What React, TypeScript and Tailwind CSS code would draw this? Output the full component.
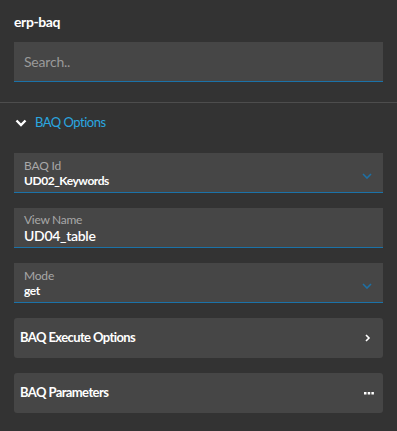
const font = { fontFamily: "Lato, 'Noto Sans', sans-serif" };

function SelectField({ label, value }: { label: string; value: string }) {
  return (
    <div className="relative h-10 bg-[#464646] border-b border-[#1b72a8] px-[10px] pt-[5px]">
      <div className="text-[12px] leading-[15px] text-[#a8a8a8] tracking-[-0.2px]">{label}</div>
      <div className="text-[12px] leading-[15px] font-bold text-white tracking-[-0.45px]">{value}</div>
      <svg
        className="absolute right-[11px] top-[20px]"
        width="10"
        height="6"
        viewBox="0 0 10 6"
        fill="none"
      >
        <path d="M1 1l4 4 4-4" stroke="#1e6fa3" strokeWidth="1.6" />
      </svg>
    </div>
  );
}

export default function App() {
  return (
    <div className="w-[397px] h-[431px] bg-[#333333] text-white" style={font}>
      <div className="px-[14px] pt-[13px] pb-[20px]">
        <div className="text-[14px] leading-[17px] font-bold tracking-[-0.4px]">erp-baq</div>
        <div className="mt-[12px] h-10 bg-[#464646] border-b border-[#1b72a8] flex items-center px-[10px]">
          <span className="text-[14px] text-[#9a9a9a] tracking-[-0.2px]">Search..</span>
        </div>
      </div>
      <div className="h-px bg-[#4d4d4d]" />
      <div className="px-[14px]">
        <div className="flex items-center h-[40px]">
          <svg width="12" height="8" viewBox="0 0 12 8" fill="none" className="ml-[1px] mr-[8px]">
            <path d="M1.5 1.5l4.5 4.5 4.5-4.5" stroke="#ffffff" strokeWidth="2.4" />
          </svg>
          <span className="text-[13px] text-[#2aa7e0] tracking-[-0.5px]">BAQ Options</span>
        </div>
        <div className="mt-[10px] flex flex-col gap-[15px]">
          <SelectField label="BAQ Id" value="UD02_Keywords" />
          <div className="h-10 bg-[#464646] border-b border-[#1b72a8] px-[10px] pt-[4px]">
            <div className="text-[12px] leading-[15px] text-[#a8a8a8] tracking-[-0.3px]">View Name</div>
            <div className="text-[14px] leading-[18px] font-semibold text-white tracking-[-0.3px]">UD04_table</div>
          </div>
          <SelectField label="Mode" value="get" />
          <div className="h-10 bg-[#464646] rounded-[3px] flex items-center justify-between px-[6px]">
            <span className="text-[13px] font-bold tracking-[-0.6px]">BAQ Execute Options</span>
            <svg width="6" height="8" viewBox="0 0 6 8" fill="none" className="mr-[6px]">
              <path d="M1 1l3 3-3 3" stroke="#ffffff" strokeWidth="1.6" />
            </svg>
          </div>
          <div className="h-10 bg-[#464646] rounded-[3px] flex items-center justify-between px-[6px]">
            <span className="text-[13px] font-bold tracking-[-0.6px]">BAQ Parameters</span>
            <svg width="10" height="3" viewBox="0 0 10 3" className="mr-[3px]">
              <rect x="0" y="0" width="2.5" height="2.5" fill="#fff" />
              <rect x="3.7" y="0" width="2.5" height="2.5" fill="#fff" />
              <rect x="7.4" y="0" width="2.5" height="2.5" fill="#fff" />
            </svg>
          </div>
        </div>
      </div>
    </div>
  );
}
